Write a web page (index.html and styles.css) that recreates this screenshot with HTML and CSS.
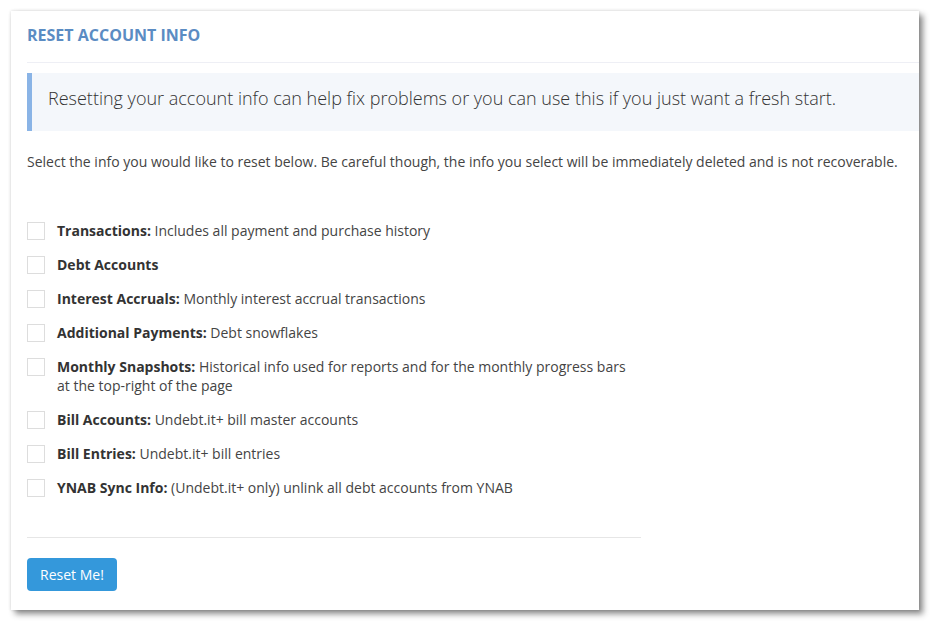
FILE: index.html
```html
<!DOCTYPE html>
<html lang="en">
<head>
    <meta charset="UTF-8">
    <title>Reset Account Info</title>
    <link rel="stylesheet" href="styles.css">
</head>
<body>
    <div class="card">
        <div class="card-header">
            <h2 class="card-title">Reset Account Info</h2>
        </div>

        <div class="callout">
            Resetting your account info can help fix problems or you can use this if you just want a fresh start.
        </div>

        <p class="intro">Select the info you would like to reset below. Be careful though, the info you select will be immediately deleted and is not recoverable.</p>

        <form class="reset-form">
            <ul class="options">
                <li class="option"><span class="box"></span><label><b>Transactions:</b> Includes all payment and purchase history</label></li>
                <li class="option"><span class="box"></span><label><b>Debt Accounts</b></label></li>
                <li class="option"><span class="box"></span><label><b>Interest Accruals:</b> Monthly interest accrual transactions</label></li>
                <li class="option"><span class="box"></span><label><b>Additional Payments:</b> Debt snowflakes</label></li>
                <li class="option"><span class="box"></span><label><b>Monthly Snapshots:</b> Historical info used for reports and for the monthly progress bars at the top-right of the page</label></li>
                <li class="option"><span class="box"></span><label><b>Bill Accounts:</b> Undebt.it+ bill master accounts</label></li>
                <li class="option"><span class="box"></span><label><b>Bill Entries:</b> Undebt.it+ bill entries</label></li>
                <li class="option"><span class="box"></span><label><b>YNAB Sync Info:</b> (Undebt.it+ only) unlink all debt accounts from YNAB</label></li>
            </ul>

            <hr class="divider">

            <button type="button" class="btn">Reset Me!</button>
        </form>
    </div>
</body>
</html>
```

FILE: styles.css
```css
body
{
    margin: 0;
    padding: 11px 19px 20px 11px;
    background: #ffffff;
    font-family: "Open Sans", Arial, sans-serif;
    color: #333333;
}
.card
{
    background: #ffffff;
    height: 599px;
    padding-left: 16px;
    box-shadow: 0 0 3px rgba(0, 0, 0, 0.15), 4px 4px 6px rgba(0, 0, 0, 0.45);
    box-sizing: border-box;
}
.card-header
{
    height: 48px;
    padding-bottom: 3px;
    border-bottom: 1px solid #eeeff5;
    display: flex;
    align-items: center;
}
.card-title
{
    margin: 0;
    font-size: 16px;
    font-weight: 700;
    text-transform: uppercase;
    color: #5b8cc3;
}
.callout
{
    margin-top: 10px;
    height: 58px;
    box-sizing: border-box;
    background: #f4f7fb;
    border-left: 5px solid #8ab4e6;
    padding: 0 0 8px 16px;
    display: flex;
    align-items: center;
    font-size: 18px;
    font-weight: 300;
    color: #333333;
}
.intro
{
    margin: 21px 0 0;
    font-size: 14px;
    line-height: 20px;
    color: #444444;
}
.reset-form
{
    width: 614px;
}
.options
{
    list-style: none;
    margin: 49px 0 0;
    padding: 0;
    display: flex;
    flex-direction: column;
    gap: 15px;
}
.option
{
    display: flex;
    align-items: flex-start;
    font-size: 14px;
    line-height: 19px;
    color: #444444;
}
.option b
{
    color: #333333;
}
.box
{
    flex: none;
    width: 18px;
    height: 18px;
    margin-top: 1px;
    margin-right: 12px;
    border: 1px solid #dddddd;
    box-sizing: border-box;
}
.divider
{
    border: none;
    border-top: 1px solid #e6e6e6;
    margin: 40px 0 20px;
}
.btn
{
    display: block;
    width: 90px;
    height: 33px;
    background: #3498db;
    color: #ffffff;
    border: none;
    border-radius: 4px;
    font-family: "Open Sans", Arial, sans-serif;
    font-size: 14px;
    cursor: pointer;
}
```
